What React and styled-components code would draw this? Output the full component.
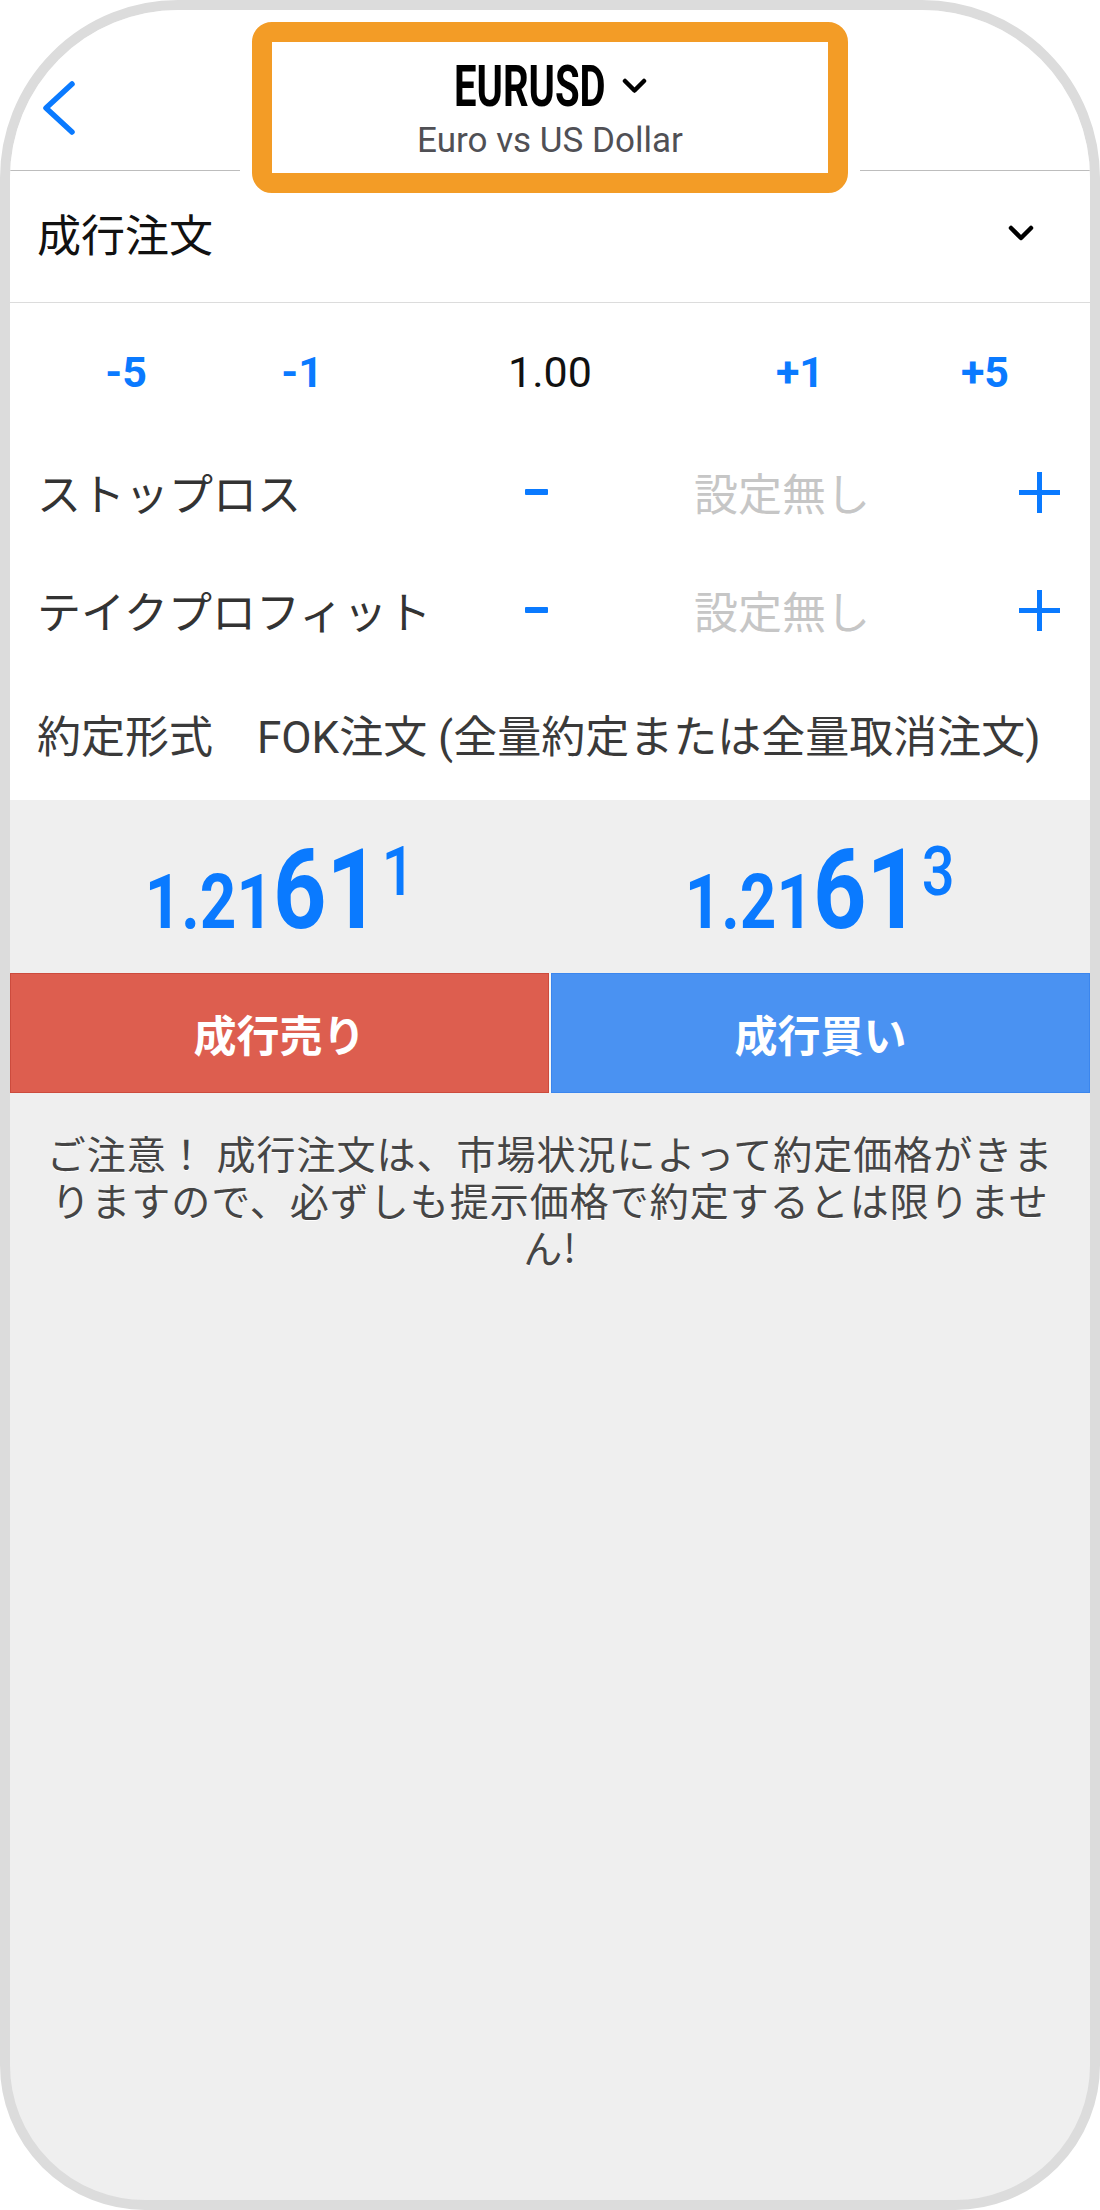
import React from "react";
import styled, { createGlobalStyle } from "styled-components";

const GlobalStyle = createGlobalStyle`
  html, body {
    margin: 0;
    padding: 0;
    background: #fff;
  }
  body {
    font-family: Roboto, "Noto Sans CJK JP", sans-serif;
  }
`;

const BLUE = "#0a7aff";

function App() {
  return (
    <>
      <GlobalStyle />
      <Frame>
        <Header>
          <BackCell>
            <svg width="40" height="60" viewBox="0 0 40 60">
              <polyline points="34,6 8,30 34,54" fill="none" stroke={BLUE} strokeWidth="5.5" strokeLinecap="round" strokeLinejoin="round" />
            </svg>
          </BackCell>
          <Highlight>
            <TitleRow>
              <SymbolBox>
                <Symbol>EURUSD</Symbol>
              </SymbolBox>
              <svg width="25" height="16" viewBox="0 0 25 16">
                <polyline points="3,3 12.5,12.5 22,3" fill="none" stroke="#000" strokeWidth="4.5" strokeLinecap="round" strokeLinejoin="round" />
              </svg>
            </TitleRow>
            <Subtitle>Euro vs US Dollar</Subtitle>
          </Highlight>
          <div />
        </Header>

        <OrderRow>
          <span>成行注文</span>
          <svg width="26" height="16" viewBox="0 0 26 16">
            <polyline points="3,3 13,13 23,3" fill="none" stroke="#000" strokeWidth="4.5" strokeLinecap="round" strokeLinejoin="round" />
          </svg>
        </OrderRow>

        <Form>
          <VolumeRow>
            <VolumeStep>-5</VolumeStep>
            <VolumeStep>-1</VolumeStep>
            <VolumeValue>1.00</VolumeValue>
            <VolumeStep>+1</VolumeStep>
            <VolumeStep>+5</VolumeStep>
          </VolumeRow>

          <AdjustRow $h={120}>
            <Label>ストップロス</Label>
            <MinusCell><Minus /></MinusCell>
            <Placeholder>設定無し</Placeholder>
            <PlusCell>
              <svg width="41" height="41" viewBox="0 0 41 41">
                <path d="M20.5 0V41M0 20.5H41" stroke={BLUE} strokeWidth="5" />
              </svg>
            </PlusCell>
          </AdjustRow>

          <AdjustRow $h={116}>
            <Label>テイクプロフィット</Label>
            <MinusCell><Minus /></MinusCell>
            <Placeholder>設定無し</Placeholder>
            <PlusCell>
              <svg width="41" height="41" viewBox="0 0 41 41">
                <path d="M20.5 0V41M0 20.5H41" stroke={BLUE} strokeWidth="5" />
              </svg>
            </PlusCell>
          </AdjustRow>

          <FillRow>約定形式　FOK注文 (全量約定または全量取消注文)</FillRow>
        </Form>

        <Quotes>
          <PriceCell>
            <PriceText>
              <Small>1.21</Small>61<Sup>1</Sup>
            </PriceText>
          </PriceCell>
          <PriceCell>
            <PriceText>
              <Small>1.21</Small>61<Sup>3</Sup>
            </PriceText>
          </PriceCell>
        </Quotes>

        <Actions>
          <TradeButton $tone="sell">成行売り</TradeButton>
          <TradeButton $tone="buy">成行買い</TradeButton>
        </Actions>

        <Notice>
          ご注意！ 成行注文は、市場状況によって約定価格がきまりますので、必ずしも提示価格で約定するとは限りません!
        </Notice>
      </Frame>
    </>
  );
}

export default App;

const Frame = styled.div`
  width: 1100px;
  height: 2210px;
  box-sizing: border-box;
  border: 10px solid #dcdcdc;
  border-radius: 178px 178px 145px 145px;
  background: #efefef;
  overflow: hidden;
  display: flex;
  flex-direction: column;
`;

const Header = styled.header`
  height: 161px;
  flex-shrink: 0;
  box-sizing: border-box;
  background: #fff;
  border-bottom: 1px solid #bdbdbd;
  display: grid;
  grid-template-columns: 242px 596px 242px;
  align-items: start;
  padding-top: 12px;
  position: relative;
  z-index: 2;
`;

const BackCell = styled.div`
  height: 171px;
  display: flex;
  align-items: center;
  padding-left: 28px;
`;

const Highlight = styled.div`
  height: 171px;
  box-sizing: border-box;
  border: 20px solid #f39c26;
  border-radius: 20px;
  background: #fff;
  box-shadow: 0 0 0 12px #fff;
  display: flex;
  flex-direction: column;
  align-items: center;
  padding-top: 15px;
`;

const TitleRow = styled.div`
  display: flex;
  align-items: center;
  gap: 16px;
  height: 58px;
`;

const SymbolBox = styled.div`
  width: 152px;
  display: flex;
  justify-content: center;
`;

const Symbol = styled.span`
  font-family: Roboto, sans-serif;
  font-weight: 700;
  font-size: 58px;
  line-height: 58px;
  color: #000;
  white-space: nowrap;
  transform: scaleX(0.69);
`;

const Subtitle = styled.div`
  margin-top: 8px;
  font-family: Roboto, sans-serif;
  font-size: 35px;
  line-height: 35px;
  color: #505055;
`;

const OrderRow = styled.div`
  height: 132px;
  flex-shrink: 0;
  box-sizing: border-box;
  background: #fff;
  border-bottom: 1px solid #dcdcdc;
  display: flex;
  align-items: center;
  justify-content: space-between;
  padding: 0 56px 8px 27px;
  font-family: "Noto Sans CJK JP", sans-serif;
  font-size: 44px;
  color: #111;
`;

const Form = styled.div`
  background: #fff;
  flex-shrink: 0;
  padding-top: 9px;
  display: flex;
  flex-direction: column;
`;

const VolumeRow = styled.div`
  height: 120px;
  display: grid;
  grid-template-columns: 176px 176px 320px 180px 190px;
  padding-left: 28px;
  justify-items: center;
  align-items: center;
  font-family: Roboto, sans-serif;
  font-size: 43px;
`;

const VolumeStep = styled.span`
  color: ${BLUE};
  font-weight: 700;
`;

const VolumeValue = styled.span`
  color: #111;
`;

const AdjustRow = styled.div`
  height: ${(p) => p.$h}px;
  display: grid;
  grid-template-columns: 486px 80px 412px 102px;
  align-items: center;
  font-family: "Noto Sans CJK JP", sans-serif;
  font-size: 44px;
`;

const Label = styled.span`
  padding-left: 27px;
  color: #333;
  white-space: nowrap;
`;

const MinusCell = styled.div`
  display: flex;
  justify-content: center;
`;

const Minus = styled.span`
  width: 23px;
  height: 6px;
  border-radius: 1px;
  background: ${BLUE};
`;

const Placeholder = styled.span`
  justify-self: center;
  color: #c6c6c6;
`;

const PlusCell = styled.div`
  display: flex;
  justify-content: center;
`;

const FillRow = styled.div`
  height: 132px;
  display: flex;
  align-items: center;
  padding-left: 27px;
  font-family: Roboto, "Noto Sans CJK JP", sans-serif;
  font-size: 44px;
  color: #3a3a3a;
  white-space: nowrap;
`;

const Quotes = styled.div`
  height: 173px;
  flex-shrink: 0;
  display: grid;
  grid-template-columns: 1fr 1fr;
`;

const PriceCell = styled.div`
  display: flex;
  justify-content: center;
  padding-top: 35px;
  box-sizing: border-box;
`;

const PriceText = styled.div`
  font-family: Roboto, sans-serif;
  font-weight: 700;
  font-size: 111px;
  line-height: 111px;
  height: 111px;
  color: ${BLUE};
  white-space: nowrap;
  transform: scaleX(0.84);
`;

const Small = styled.span`
  font-size: 76px;
  line-height: 0;
`;

const Sup = styled.span`
  font-size: 69px;
  font-weight: 500;
  line-height: 0;
  vertical-align: 33px;
  margin-left: 2px;
`;

const Actions = styled.div`
  height: 120px;
  flex-shrink: 0;
  display: grid;
  grid-template-columns: 1fr 1fr;
  gap: 2px;
  background: #f6f6f6;
`;

const TradeButton = styled.button`
  margin: 0;
  border: 1px solid ${(p) => (p.$tone === "sell" ? "#cc4b3d" : "#3b86ee")};
  background: ${(p) => (p.$tone === "sell" ? "#dd5e4f" : "#4a92f2")};
  color: #fff;
  font-family: "Noto Sans CJK JP", sans-serif;
  font-weight: 700;
  font-size: 43px;
  padding: 0;
`;

const Notice = styled.p`
  margin: 0;
  padding: 36px 30px 0;
  text-align: center;
  font-family: "Noto Sans CJK JP", sans-serif;
  font-size: 39px;
  letter-spacing: 1px;
  line-height: 47px;
  color: #454545;
  text-shadow: 0 1px 0 #fff;
`;
